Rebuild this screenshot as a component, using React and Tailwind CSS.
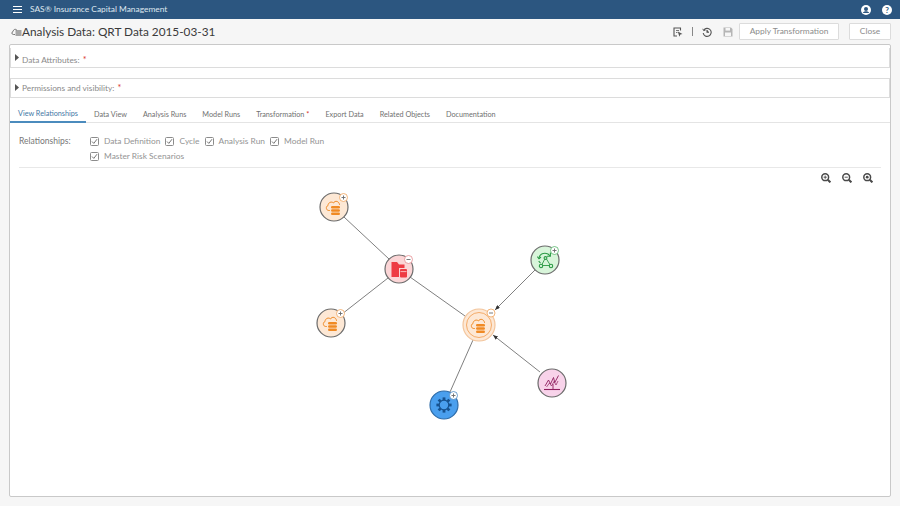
import React from 'react';

const tabs = [
  { label: 'View Relationships', active: true },
  { label: 'Data View' },
  { label: 'Analysis Runs' },
  { label: 'Model Runs' },
  { label: 'Transformation', required: true },
  { label: 'Export Data' },
  { label: 'Related Objects' },
  { label: 'Documentation' },
];

const Caret = () => (
  <svg width="4" height="7" viewBox="0 0 4 7" className="mt-[-1px]">
    <path d="M0 0 L4 3.5 L0 7 Z" fill="#555" />
  </svg>
);

const Section = ({ label, className, labelClass = '' }) => (
  <div className={`flex h-5 items-center gap-[3px] border border-[#dcdcdc] pl-[4px] ${className}`}>
    <Caret />
    <span className={`text-[8.3px] leading-[10px] text-[#8a8a8a] ${labelClass}`}>
      {label}: <span className="ml-px text-[9px] leading-none text-[#d9342b]">*</span>
    </span>
  </div>
);

const Check = ({ label }) => (
  <label className="flex items-center gap-[5px]">
    <svg width="9" height="9" viewBox="0 0 9 9">
      <rect x="0.5" y="0.5" width="8" height="8" rx="1" fill="#fff" stroke="#8c8c8c" />
      <path d="M2 4.5 L3.8 6.4 L7 2.2" fill="none" stroke="#666" strokeWidth="0.9" />
    </svg>
    <span className="whitespace-nowrap text-[8.4px] text-[#949494]">{label}</span>
  </label>
);

const CloudDb = ({ cx, cy, c = '#f08a24' }) => (
  <g transform={`translate(${cx - 8} ${cy - 7})`}>
    <path
      d="M3.8 10.5 H2.8 C0 10.5 -0.6 6.4 2 5.6 C2 2.4 5.8 1 7.4 3 C9 0.2 13 1 13.6 4.8"
      fill="none"
      stroke={c}
      strokeWidth="1"
    />
    <rect x="5" y="6" width="9" height="2.6" rx="1.3" fill={c} />
    <rect x="5" y="9.2" width="9" height="2.6" rx="1.3" fill={c} />
    <rect x="5" y="12.4" width="9" height="2.6" rx="1.3" fill={c} />
  </g>
);

const FolderDb = ({ cx, cy }) => (
  <g transform={`translate(${cx - 7.5} ${cy - 7})`}>
    <path d="M0 0 H5.5 L7.5 2.5 H13 V6 H7.5 V15 H0 Z" fill="#ee3b43" />
    <rect x="8.5" y="7" width="7" height="8.5" rx="1" fill="#ee3b43" />
    <path d="M9 9.6 H15" stroke="#fbd5d6" strokeWidth="0.8" />
  </g>
);

const Cycle = ({ cx, cy }) => (
  <g transform={`translate(${cx - 8} ${cy - 9})`} fill="none" stroke="#2c9a45" strokeWidth="1.1">
    <path d="M2 7 C2.5 3 7 1 11 3 L13 4.8" />
    <path d="M13.4 1.6 V5.2 H10" />
    <path d="M0.4 5.6 L2 7.8 L4 6" />
    <path d="M1.8 10 C2.2 11 2.8 11.6 3.6 12" />
    <path d="M8.5 6.5 L4.5 14.5 H13.5 Z" strokeWidth="0.9" />
    <circle cx="8.5" cy="7" r="1.4" fill="#d8f5da" />
    <circle cx="4" cy="15" r="1.7" fill="#d8f5da" />
    <circle cx="14" cy="15" r="1.7" fill="#d8f5da" />
  </g>
);

const ChartIcon = ({ cx, cy }) => (
  <g transform={`translate(${cx - 8} ${cy - 8})`} fill="none" stroke="#8e1f5f" strokeWidth="0.9">
    <path d="M1 11 L4.5 5 L6.5 9 L9.5 2.5 L10.8 7.5 L14.5 0.5" />
    <path d="M2.5 12 L5.5 8 L7.5 11 L10 6.5 L12 10 L14 6" strokeWidth="0.7" />
    <path d="M9 9 V14.5" />
    <path d="M0 14.5 H16" strokeWidth="1.1" />
  </g>
);

const Gear = ({ cx, cy }) => (
  <g transform={`translate(${cx} ${cy})`}>
    <circle r="4.8" fill="none" stroke="#17528f" strokeWidth="1.2" />
    {[0, 45, 90, 135, 180, 225, 270, 315].map((a) => (
      <rect key={a} x="-1.4" y="-7.6" width="2.8" height="2.8" fill="#17528f" transform={`rotate(${a})`} />
    ))}
  </g>
);

const Node = ({ x, y, r = 14, fill, stroke = '#6b6b6b', sign, badge, off = 9.5, children }) => {
  const bx = x + off;
  const by = y - off;
  return (
    <g>
      <circle cx={x} cy={y} r={r} fill={fill} stroke={stroke} strokeWidth="1.2" />
      {children}
      {sign && (
        <g>
          <circle cx={bx} cy={by} r="4" fill="#fff" stroke={badge} strokeWidth="0.8" />
          <path
            d={sign === '+' ? `M${bx - 2} ${by} H${bx + 2} M${bx} ${by - 2} V${by + 2}` : `M${bx - 2} ${by} H${bx + 2}`}
            stroke="#6b6b6b"
            strokeWidth="0.9"
          />
        </g>
      )}
    </g>
  );
};

const Graph = () => (
  <svg className="block h-[329px] w-[880px]" viewBox="10 168 880 329">
    <defs>
      <marker id="arrow" markerWidth="5" markerHeight="4" refX="5" refY="2" orient="auto">
        <path d="M0 0 L5 2 L0 4 Z" fill="#333" />
      </marker>
    </defs>
    <g stroke="#808080" strokeWidth="1">
      <line x1="344" y1="217" x2="389" y2="259" />
      <line x1="388" y1="278" x2="342" y2="314" />
      <line x1="410" y1="277" x2="465" y2="316" />
      <line x1="473" y1="340" x2="450" y2="392" />
      <line x1="535" y1="270" x2="495" y2="310" markerEnd="url(#arrow)" />
      <line x1="540" y1="372" x2="493" y2="335" markerEnd="url(#arrow)" />
    </g>
    <Node x={334} y={207} fill="#fde8d5" sign="+" badge="#f0a35a">
      <CloudDb cx={334} cy={207} />
    </Node>
    <Node x={399} y={269} fill="#fbd5d6" sign="-" badge="#e58a8e">
      <FolderDb cx={399} cy={269} />
    </Node>
    <Node x={331} y={323} fill="#fde8d5" sign="+" badge="#f0a35a">
      <CloudDb cx={331} cy={323} />
    </Node>
    <Node x={479} y={325} r={16} fill="#fde8d5" stroke="#f3c59c" sign="-" badge="#f0a35a" off={12}>
      <circle cx={479} cy={325} r="12.5" fill="none" stroke="#f19c4e" strokeWidth="0.8" />
      <CloudDb cx={479} cy={325} />
    </Node>
    <Node x={545} y={260} fill="#d8f5da" sign="+" badge="#55b56a">
      <Cycle cx={545} cy={260} />
    </Node>
    <Node x={552} y={383} fill="#f8d3ea">
      <ChartIcon cx={552} cy={383} />
    </Node>
    <Node x={444} y={405} fill="#4a9fee" stroke="#2f6ca8" sign="+" badge="#4a86c0">
      <Gear cx={444} cy={405} />
    </Node>
  </svg>
);

const Magnifier = ({ children }) => (
  <svg width="10" height="10" viewBox="0 0 10 10" fill="none" stroke="#4a4a4a">
    <circle cx="4.2" cy="4.2" r="3.4" strokeWidth="1.5" />
    <path d="M6.8 6.8 L9.4 9.4" strokeWidth="2" />
    {children}
  </svg>
);

export default function App() {
  return (
    <div className="flex h-[506px] w-[900px] flex-col overflow-hidden bg-[#f6f6f6] font-['Lato',sans-serif]">
      <header className="flex h-[19px] items-center justify-between bg-[#2c5680] pl-[13px] pr-[8px]">
        <div className="flex items-center gap-[8px]">
          <div className="flex w-[9px] flex-col gap-[1.5px]">
            <span className="h-[1.5px] bg-white" />
            <span className="h-[1.5px] bg-white" />
            <span className="h-[1.5px] bg-white" />
          </div>
          <span className="text-[8.4px] text-[#dfe7ef]">SAS® Insurance Capital Management</span>
        </div>
        <div className="flex items-center gap-[11px]">
          <svg width="10" height="10" viewBox="0 0 10 10">
            <circle cx="5" cy="5" r="5" fill="#fff" />
            <circle cx="5" cy="4" r="2" fill="#2c5680" />
            <path d="M1.8 8 C2.6 5.8 7.4 5.8 8.2 8 Z" fill="#2c5680" />
          </svg>
          <div className="flex h-[10px] w-[10px] items-center justify-center rounded-full bg-white text-[8px] font-bold leading-none text-[#2c5680]">
            ?
          </div>
        </div>
      </header>

      <div className="flex h-[25px] items-center justify-between pl-[11px] pr-[9px]">
        <div className="flex items-center">
          <svg width="11" height="10" viewBox="0 0 11 10" fill="none" stroke="#555" strokeWidth="0.8">
            <path d="M4 7.5 H2.5 C0.5 7.5 0.3 5 2 4.6 C2.2 2.4 4.6 1.6 5.8 3" />
            <path d="M4.5 4 H10.5 M4.5 6 H10.5 M4.5 8 H10.5" strokeWidth="1.2" />
          </svg>
          <h1 className="text-[11.8px] text-[#3a3a3a]">Analysis Data: QRT Data 2015-03-31</h1>
        </div>
        <div className="flex items-center">
          <svg width="10" height="10" viewBox="0 0 10 10" fill="none" stroke="#555" strokeWidth="1.1" className="mr-[9px]">
            <path d="M7.5 3.5 V1 H1 V9 H4" />
            <path d="M3 3.5 H6 M3 5.5 H4.5" strokeWidth="0.8" />
            <path d="M4.8 4.5 L9.5 7 L7.3 7.6 L6.4 9.7 Z" fill="#555" stroke="none" />
          </svg>
          <span className="mr-[9px] h-[9px] w-px bg-[#888]" />
          <svg width="10" height="10" viewBox="0 0 10 10" fill="none" stroke="#555" strokeWidth="1.1" className="mr-[11px]">
            <path d="M1.8 3.2 A4 4 0 1 1 1.2 6" />
            <path d="M0.8 1.8 L1.6 3.6 L3.5 3.2" strokeWidth="0.9" />
            <path d="M5 3 V5.3 H7" fill="#555" />
          </svg>
          <svg width="10" height="10" viewBox="0 0 10 10" className="mr-[6px]">
            <path d="M0.5 0.5 H8 L9.5 2 V9.5 H0.5 Z" fill="#b5b5b5" />
            <rect x="2.5" y="1" width="4.5" height="2.6" fill="#f6f6f6" />
            <rect x="2" y="5.5" width="6" height="3.5" fill="#f6f6f6" />
          </svg>
          <button className="h-[17px] w-[100px] rounded-[1px] border border-[#dcdcdc] bg-white text-[8.4px] text-[#8c8c8c]">
            Apply Transformation
          </button>
          <button className="ml-[10px] h-[17px] w-[42px] rounded-[1px] border border-[#dcdcdc] bg-white text-[8.4px] text-[#8c8c8c]">
            Close
          </button>
        </div>
      </div>

      <main className="ml-[9px] h-[453px] w-[882px] rounded-[2px] border border-[#c9c9c9] bg-white">
        <Section label="Data Attributes" className="mt-[3px] border-t-0" labelClass="pt-[4px]" />
        <Section label="Permissions and visibility" className="mt-[10px]" />
        <nav className="mt-[9px] flex h-[16px] border-b border-[#e4e4e4]">
          {tabs.map((t) => (
            <div
              key={t.label}
              className={`flex h-[16px] items-center whitespace-nowrap px-[8px] pt-px text-[7.25px] ${
                t.active ? 'border-b-2 border-[#4b8bbd] text-[#3f78a6]' : 'text-[#707070]'
              }`}
            >
              {t.label}
              {t.required && <span className="ml-[2px] text-[#d9342b]">*</span>}
            </div>
          ))}
        </nav>
        <div className="mx-[9px] flex h-[45px] border-b border-[#e8e8e8] pt-[11px]">
          <span className="w-[71px] text-[8.5px] leading-[14px] text-[#777]">Relationships:</span>
          <div className="w-[260px]">
            <div className="flex h-[14px] gap-[5px]">
              <Check label="Data Definition" />
              <Check label="Cycle" />
              <Check label="Analysis Run" />
              <Check label="Model Run" />
            </div>
            <div className="mt-px flex h-[14px]">
              <Check label="Master Risk Scenarios" />
            </div>
          </div>
        </div>
        <div className="relative">
          <Graph />
          <div className="absolute right-[17px] top-[5px] flex gap-[11px]">
            <Magnifier>
              <path d="M2.6 4.2 H5.8 M4.2 2.6 V5.8" strokeWidth="0.9" />
            </Magnifier>
            <Magnifier>
              <path d="M2.6 4.2 H5.8" strokeWidth="0.9" />
            </Magnifier>
            <Magnifier>
              <circle cx="4.2" cy="4.2" r="1.4" fill="#4a4a4a" stroke="none" />
            </Magnifier>
          </div>
        </div>
      </main>
    </div>
  );
}
